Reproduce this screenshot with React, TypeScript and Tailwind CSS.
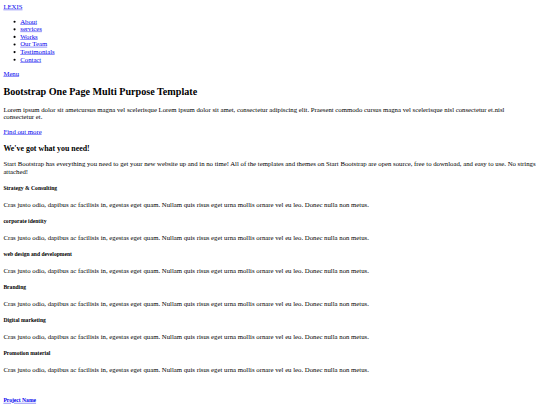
import React from 'react';

/**
 * Service entry shown under the intro section
 */
interface Service {
  title: string;
  text: string;
}

const navLinks: string[] = ['About', 'services', 'Works', 'Our Team', 'Testimonials', 'Contact'];

const serviceText =
  'Cras justo odio, dapibus ac facilisis in, egestas eget quam. Nullam quis risus eget urna mollis ornare vel eu leo. Donec nulla non metus.';

const services: Service[] = [
  { title: 'Strategy & Consulting', text: serviceText },
  { title: 'corporate identity', text: serviceText },
  { title: 'web design and development', text: serviceText },
  { title: 'Branding', text: serviceText },
  { title: 'Digital marketing', text: serviceText },
  { title: 'Promotion material', text: serviceText },
];

const link = 'text-[#0000EE] underline';

/**
 * App - an unstyled one page template, as the browser draws it without CSS.
 * The page is laid out at a 1280px desktop width and shown zoomed out.
 */
const App: React.FC = () => {
  return (
    <div className="h-[405px] w-[540px] overflow-hidden bg-white">
      <div className="w-[1280px] origin-top-left scale-[0.421875] p-2 font-['Liberation_Serif',serif] text-[16px] leading-[normal] text-black">
        {/* Navigation */}
        <nav>
          <div>
            <a href="#" className={link}>LEXIS</a>
          </div>
          <ul className="my-4 list-disc pl-10">
            {navLinks.map(item => (
              <li key={item}>
                <a href="#" className={link}>{item}</a>
              </li>
            ))}
          </ul>
          <a href="#" className={link}>Menu</a>
        </nav>

        {/* Header */}
        <section>
          <h1 className="my-[19.92px] text-[24px] font-bold">Bootstrap One Page Multi Purpose Template</h1>
          <p className="my-4">
            Lorem ipsum dolor sit ametcursus magna vel scelerisque Lorem ipsum dolor sit amet, consectetur adipiscing elit. Praesent commodo cursus magna vel scelerisque nisl consectetur et.nisl consectetur et.
          </p>
          <a href="#" className={link}>Find out more</a>
        </section>

        {/* Services */}
        <section>
          <h3 className="my-[18.72px] text-[18.72px] font-bold">We've got what you need!</h3>
          <p className="my-4">
            Start Bootstrap has everything you need to get your new website up and in no time! All of the templates and themes on Start Bootstrap are open source, free to download, and easy to use. No strings attached!
          </p>
          {services.map(service => (
            <div key={service.title}>
              <h5 className="my-[22.18px] text-[13.28px] font-bold">{service.title}</h5>
              <p className="my-4">{service.text}</p>
            </div>
          ))}
        </section>

        {/* Works */}
        <section className="pt-[18px]">
          <h5 className="my-[22.18px] text-[13.28px] font-bold">
            <a href="#" className={link}>Project Name</a>
          </h5>
        </section>
      </div>
    </div>
  );
};

export default App;
